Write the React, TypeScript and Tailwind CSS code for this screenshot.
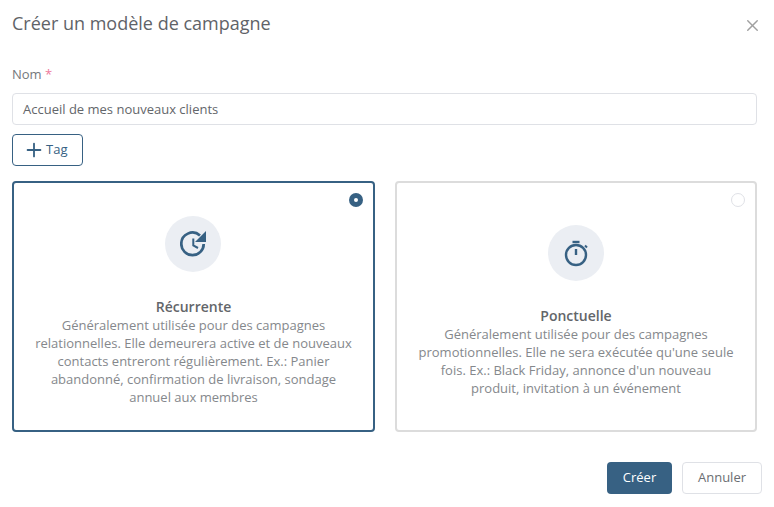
import { Plus, X } from "lucide-react";

const sans = "font-['Open_Sans',sans-serif]";

function RecurIcon() {
  return (
    <svg width="26" height="26" viewBox="0 0 26 26" fill="none" className="text-[#376183]">
      <path d="M20 4.5A11.2 11.2 0 0 0 1.3 13 11.2 11.2 0 0 0 23.7 13" stroke="currentColor" strokeWidth="2.7" />
      <path d="M26 0v11H15z" fill="currentColor" />
      <path d="M13.3 7.5v7l4.7 2.5" stroke="currentColor" strokeWidth="2" />
    </svg>
  );
}

function TimerIcon() {
  return (
    <svg width="26" height="28" viewBox="0 0 26 28" fill="none" className="text-[#376183]">
      <circle cx="13" cy="16" r="10" stroke="currentColor" strokeWidth="2.4" />
      <path d="M9.5 3h7" stroke="currentColor" strokeWidth="2.4" />
      <path d="M13 10v6" stroke="currentColor" strokeWidth="2.4" />
      <path d="M22 6.5l2 2" stroke="currentColor" strokeWidth="2" />
    </svg>
  );
}

const cards = [
  {
    title: "Récurrente",
    text: "Généralement utilisée pour des campagnes relationnelles. Elle demeurera active et de nouveaux contacts entreront régulièrement. Ex.: Panier abandonné, confirmation de livraison, sondage annuel aux membres",
    icon: <RecurIcon />,
    selected: true,
  },
  {
    title: "Ponctuelle",
    text: "Généralement utilisée pour des campagnes promotionnelles. Elle ne sera exécutée qu'une seule fois. Ex.: Black Friday, annonce d'un nouveau produit, invitation à un événement",
    icon: <TimerIcon />,
    selected: false,
  },
];

export default function App() {
  return (
    <div className={`${sans} w-[774px] h-[507px] bg-white overflow-hidden flex flex-col text-[#6b6e72]`}>
      <div className="flex items-center justify-between pl-3 pr-3 pt-2 h-[38px]">
        <div className="text-[18px] leading-6 text-[#5f6368]">Créer un modèle de campagne</div>
        <X size={19} strokeWidth={1.8} className="text-[#a0a0a0] mt-1" />
      </div>

      <div className="px-3 pt-[27px] w-[769px] flex flex-col">
        <div className="text-[13px] leading-[18px] text-[#75787c]">
          Nom <span className="text-[#ee7a9c]">*</span>
        </div>
        <div className="mt-[10px] h-8 border border-[#dfe1e6] rounded flex items-center px-[10px] pt-px text-[13px] text-[#63666a]">
          Accueil de mes nouveaux clients
        </div>
        <div className="mt-[9px] w-[71px] h-8 border border-[#376183] rounded flex items-center pl-[10px] text-[13px] text-[#376183]">
          <Plus size={22} strokeWidth={2} />
          <span className="ml-px">Tag</span>
        </div>

        <div className="mt-[15px] grid grid-cols-[363px_362px] gap-5">
          {cards.map((card) => (
            <div
              key={card.title}
              className={`relative h-[251px] rounded border-2 bg-white flex flex-col items-center justify-center px-[21px] pt-2 text-center ${
                card.selected ? "border-[#376183]" : "border-[#dcdcdc]"
              }`}
            >
              {card.selected ? (
                <div className="absolute top-[10px] right-[10px] w-[14px] h-[14px] rounded-full bg-[#376183] flex items-center justify-center">
                  <div className="w-1 h-1 rounded-full bg-white" />
                </div>
              ) : (
                <div className="absolute top-[10px] right-[10px] w-[14px] h-[14px] rounded-full border border-[#dfe1e6]" />
              )}
              <div className={`w-14 h-14 rounded-full bg-[#ebeef3] flex items-center justify-center ${card.selected ? "mr-px" : ""}`}>
                {card.icon}
              </div>
              <div className="mt-[26px] text-[14px] leading-[18px] font-semibold text-[#63666a]">{card.title}</div>
              <div className="text-[13px] leading-[18px] text-[#85888c]">{card.text}</div>
            </div>
          ))}
        </div>
      </div>

      <div className="mt-[30px] pr-3 flex justify-end gap-[10px] text-[13px]">
        <div className="w-[65px] h-8 rounded bg-[#376183] text-white flex items-center justify-center">Créer</div>
        <div className="w-20 h-8 rounded border border-[#dfe1e6] text-[#6b6e72] flex items-center justify-center">Annuler</div>
      </div>
    </div>
  );
}
